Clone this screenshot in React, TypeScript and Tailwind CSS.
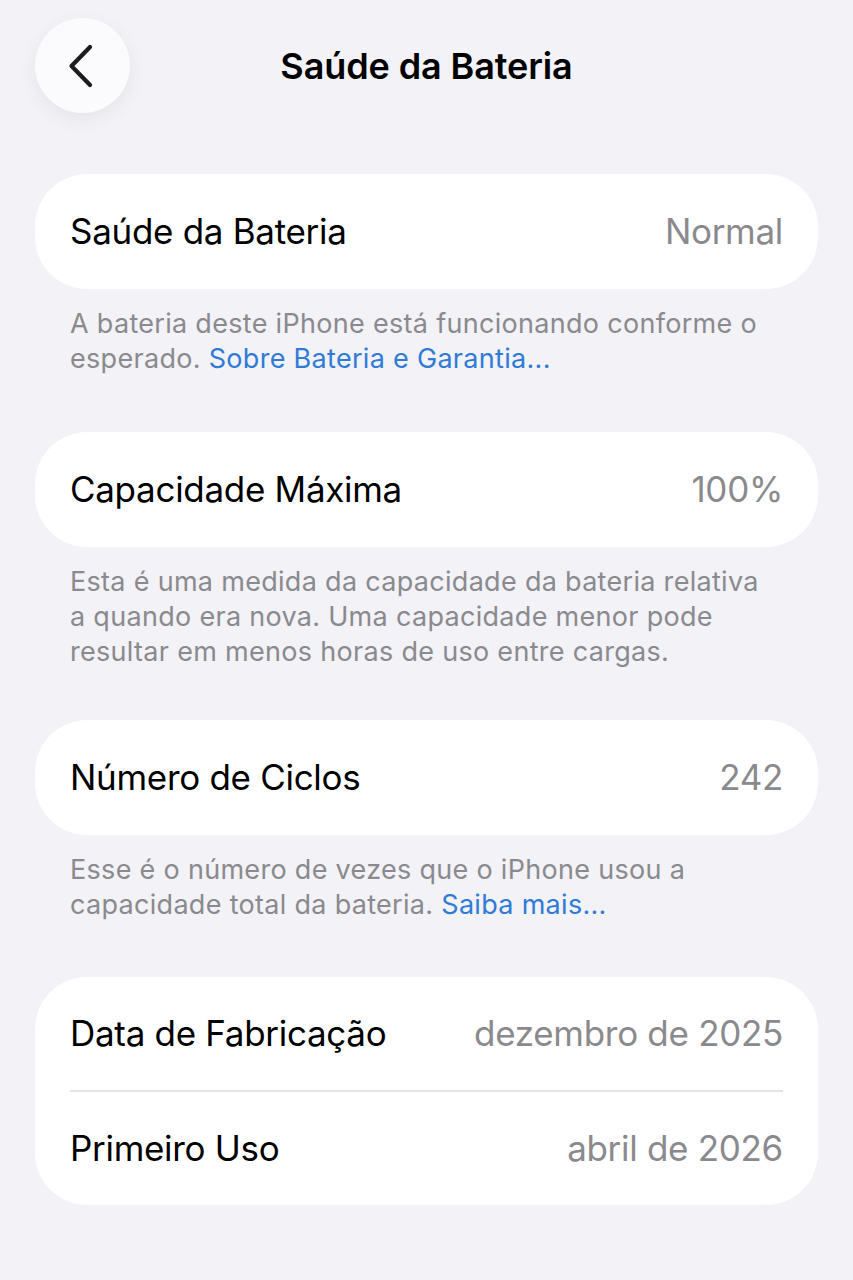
import React from "react";

const font = { fontFamily: "Inter, 'Noto Sans', sans-serif" };

function Row({ label, value, tall = true }: { label: string; value: string; tall?: boolean }) {
  return (
    <div className={(tall ? "h-[115px]" : "h-[113px]") + " flex items-center justify-between px-[35px]"}>
      <span className="text-[35px] text-black tracking-[-0.3px]">{label}</span>
      <span className="text-[35px] text-[#8a8a8e] tracking-[-0.3px]">{value}</span>
    </div>
  );
}

export default function App() {
  return (
    <div className="min-h-[1280px] w-full bg-[#f2f2f7] antialiased" style={font}>
      <div className="grid grid-cols-[1fr_auto_1fr] items-center px-[35px] pt-[18px]">
        <div>
          <button className="flex h-[95px] w-[95px] items-center justify-center rounded-full bg-[#fbfbfd] shadow-[0_6px_20px_rgba(0,0,0,0.06)]">
            <svg width="30" height="44" viewBox="0 0 30 44" fill="none">
              <path d="M22 3 L3.5 22 L22 41" stroke="#1c1c1e" strokeWidth="4.2" strokeLinecap="round" strokeLinejoin="round" />
            </svg>
          </button>
        </div>
        <h1 className="text-[36px] font-semibold text-black tracking-[-0.1px]">Saúde da Bateria</h1>
        <div />
      </div>

      <div className="mt-[61px] px-[35px]">
        <div className="rounded-[52px] bg-white">
          <Row label="Saúde da Bateria" value="Normal" />
        </div>
        <p className="mt-[17px] pl-[35px] pr-[55px] text-[27px] leading-[35px] text-[#8a8a8e] tracking-[0.3px]">
          A bateria deste iPhone está funcionando conforme o esperado.{" "}
          <span className="text-[#2f7bd6]">Sobre Bateria e Garantia...</span>
        </p>

        <div className="mt-[56px] rounded-[52px] bg-white">
          <Row label="Capacidade Máxima" value="100%" />
        </div>
        <p className="mt-[17px] pl-[35px] pr-[55px] text-[27px] leading-[35px] text-[#8a8a8e] tracking-[0.3px]">
          Esta é uma medida da capacidade da bateria relativa a quando era nova. Uma capacidade menor pode resultar em menos horas de uso entre cargas.
        </p>

        <div className="mt-[51px] rounded-[52px] bg-white">
          <Row label="Número de Ciclos" value="242" />
        </div>
        <p className="mt-[17px] pl-[35px] pr-[55px] text-[27px] leading-[35px] text-[#8a8a8e] tracking-[0.3px]">
          Esse é o número de vezes que o iPhone usou a capacidade total da bateria.{" "}
          <span className="text-[#2f7bd6]">Saiba mais...</span>
        </p>

        <div className="mt-[55px] rounded-[52px] bg-white">
          <Row label="Data de Fabricação" value="dezembro de 2025" tall={false} />
          <div className="mx-[35px] h-[2px] bg-[#e3e3e8]" />
          <Row label="Primeiro Uso" value="abril de 2026" tall={false} />
        </div>
      </div>
    </div>
  );
}
